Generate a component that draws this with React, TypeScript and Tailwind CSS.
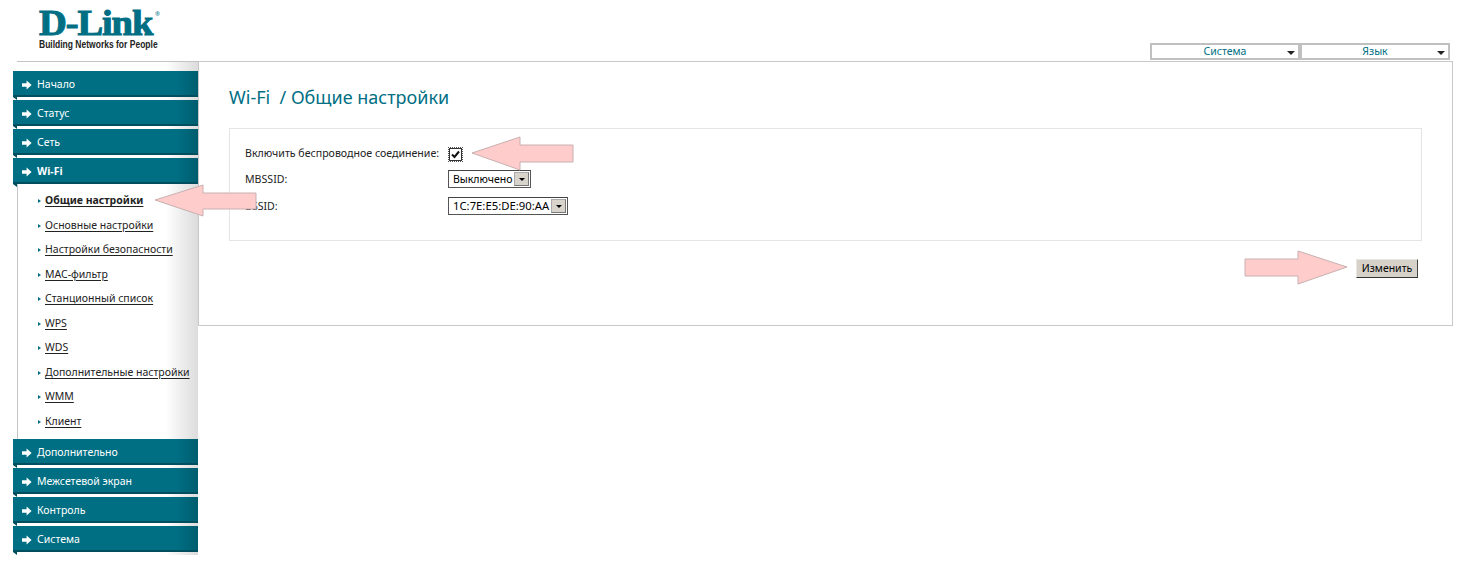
const font = "font-['Noto_Sans','Liberation_Sans',sans-serif]";

const topMenu = ["Начало", "Статус", "Сеть", "Wi-Fi"];
const bottomMenu = ["Дополнительно", "Межсетевой экран", "Контроль", "Система"];
const subMenu = [
  "Общие настройки",
  "Основные настройки",
  "Настройки безопасности",
  "MAC-фильтр",
  "Станционный список",
  "WPS",
  "WDS",
  "Дополнительные настройки",
  "WMM",
  "Клиент",
];

function MenuItem({ label, active }: { label: string; active?: boolean }) {
  return (
    <div className="relative -ml-[4px] mb-[3px] flex h-[26px] items-center border-b-2 border-[#004e5e] bg-gradient-to-r from-[#006f84] from-[88%] to-[#005d6f] pl-[9px] pt-[3px]">
      <svg width="10" height="10" viewBox="0 0 10 10" className="mr-[5px]">
        <path d="M0 3.2H4.6V0.6L9.6 5L4.6 9.4V6.8H0Z" fill="#fff" />
      </svg>
      <span className={`text-[10.5px] text-white ${active ? "font-bold" : ""}`}>{label}</span>
      <span className="absolute -bottom-[5px] left-0 h-0 w-0 border-t-[3px] border-l-[4px] border-t-[#004e5e] border-l-transparent" />
    </div>
  );
}

function Select({ value, width, size }: { value: string; width: string; size: string }) {
  return (
    <div className={`flex h-[18px] items-center justify-between border border-[#555] border-t-[#444] bg-white pl-[4px] pr-[1px] ${width}`}>
      <span className={`leading-none text-black ${size}`}>{value}</span>
      <span className="flex h-[14px] w-[15px] items-center justify-center border border-[#aaa] border-r-[#777] border-b-[#777] bg-[#d8d4cc]">
        <span className="h-0 w-0 border-x-[3px] border-t-[3px] border-x-transparent border-t-black" />
      </span>
    </div>
  );
}

function TopDrop({ label, width }: { label: string; width: string }) {
  return (
    <div className={`relative flex h-[17px] items-center justify-center border-2 border-[#c0c0c0] ${width}`}>
      <span className="text-[10.5px] leading-none text-[#006f84]">{label}</span>
      <span className="absolute right-[3px] top-[6px] h-0 w-0 border-x-[4px] border-t-[4px] border-x-transparent border-t-[#222]" />
    </div>
  );
}

function Arrow({ points, box, className }: { points: string; box: string; className: string }) {
  return (
    <svg viewBox={box} className={`absolute ${className}`}>
      <polygon points={points} fill="#ffcccc" stroke="#c9b0b0" strokeWidth="1" />
    </svg>
  );
}

export default function App() {
  return (
    <div className={`relative h-[573px] w-[1484px] overflow-hidden bg-white ${font}`}>
      <div className="flex h-[61px] items-start justify-between pl-[39px] pr-[34px]">
        <div className="mt-[10px] flex w-[120px] flex-col">
          <div className="relative flex h-[28px] items-start">
            <span className="origin-left scale-x-[1.1] font-['Liberation_Serif',serif] text-[35px] font-bold leading-[28px] tracking-[-1px] text-[#006f84] [-webkit-text-stroke:1px_#006f84]">D-Link</span>
            <span className="absolute left-[116px] top-[1px] text-[6px] leading-none text-[#006f84]">®</span>
          </div>
          <span className="origin-left scale-x-[0.81] whitespace-nowrap font-['Liberation_Sans',sans-serif] text-[10.5px] font-bold leading-[12px] text-[#222]">Building Networks for People</span>
        </div>
        <div className="mt-[43px] flex">
          <TopDrop label="Система" width="w-[150px]" />
          <TopDrop label="Язык" width="w-[150px]" />
        </div>
      </div>

      <div className="ml-[17px] flex w-[1436px] items-start">
        <div className="flex h-[494px] w-[182px] flex-col border-t border-t-[#c4c4c4] bg-gradient-to-r from-white from-[82%] to-[#dcdcdc] pt-[9px]">
          {topMenu.map((m) => (
            <MenuItem key={m} label={m} active={m === "Wi-Fi"} />
          ))}
          <div className="-mt-[3px] flex h-[255px] flex-col border-l border-l-[#c4c4c4] pt-[5px]">
            {subMenu.map((s, i) => (
              <div key={s} className="flex h-[24.5px] items-center pl-[20px]">
                <span className="mr-[4px] h-0 w-0 border-y-[2px] border-l-[3px] border-y-transparent border-l-[#006f84]" />
                <span className={`whitespace-nowrap text-[10.5px] text-[#222] underline underline-offset-2 ${i === 0 ? "font-bold" : ""}`}>{s}</span>
              </div>
            ))}
          </div>
          {bottomMenu.map((m) => (
            <MenuItem key={m} label={m} />
          ))}
        </div>

        <div className="h-[265px] flex-1 border border-[#c8c8c8] px-[30px] pt-[24px]">
          <h1 className="text-[18px] leading-[22px] text-[#006f84]">Wi-Fi&nbsp; / Общие настройки</h1>
          <div className="mt-[20px] h-[113px] w-[1193px] border border-[#e4e4e4] px-[15px] pt-[14px]">
            <div className="flex h-[22px] items-center">
              <span className="w-[204px] text-[10.6px] text-[#222]">Включить беспроводное соединение:</span>
              <span className="flex h-[13px] w-[13px] items-center justify-center border border-[#333] outline-1 outline-dotted outline-[#555]">
                <svg width="11" height="11" viewBox="0 0 11 11">
                  <path d="M2 5.5L4.5 8L9 2.5" fill="none" stroke="#111" strokeWidth="2" />
                </svg>
              </span>
            </div>
            <div className="mt-[3px] flex h-[22px] items-center">
              <span className="mt-[2px] w-[203px] text-[10.6px] text-[#222]">MBSSID:</span>
              <Select value="Выключено" width="w-[83px]" size="text-[10.5px]" />
            </div>
            <div className="mt-[5px] flex h-[22px] items-center">
              <span className="mt-[2px] w-[203px] text-[10.6px] text-[#222]">BSSID:</span>
              <Select value="1C:7E:E5:DE:90:AA" width="w-[120px]" size="text-[11.3px]" />
            </div>
          </div>
          <div className="mt-[18px] flex w-[1189px] justify-end">
            <button className="flex h-[19px] w-[62px] items-center justify-center border border-[#e8e6e0] border-r-[#444] border-b-[#333] bg-[#d6d2ca] text-[10.5px] text-black">
              Изменить
            </button>
          </div>
        </div>
      </div>

      <Arrow className="left-[471px] top-[136px] h-[36px] w-[104px]" box="0 0 104 36" points="1,17 49,1 49,9 102,9 102,26 49,26 49,34" />
      <Arrow className="left-[154px] top-[184px] h-[34px] w-[104px]" box="0 0 104 34" points="1,16 49,1 49,9 102,9 102,25 49,25 49,32" />
      <Arrow className="left-[1244px] top-[250px] h-[36px] w-[105px]" box="0 0 105 36" points="1,9 54,9 54,1 103,17 54,34 54,26 1,26" />
    </div>
  );
}
